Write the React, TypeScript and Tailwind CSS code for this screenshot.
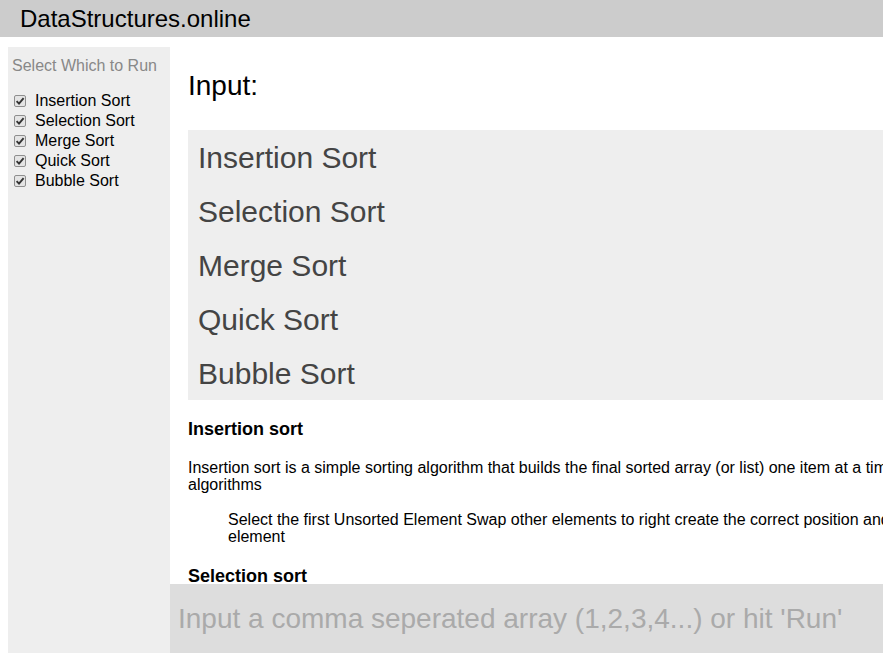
const algorithms = [
  "Insertion Sort",
  "Selection Sort",
  "Merge Sort",
  "Quick Sort",
  "Bubble Sort",
];

function CheckMark() {
  return (
    <span className="w-[12px] h-[12px] shrink-0 rounded-[2px] border border-[#8e8e8e] bg-[#e4e4e4] flex items-center justify-center">
      <svg width="10" height="10" viewBox="0 0 10 10">
        <path
          d="M1.6 5.2 L4 7.6 L8.6 2.2"
          fill="none"
          stroke="#333"
          strokeWidth="1.9"
        />
      </svg>
    </span>
  );
}

function Sidebar() {
  return (
    <aside className="w-[162px] shrink-0 bg-[#eeeeee] pl-[4px] pt-[10px]">
      <p className="text-[16px] leading-[18px] text-[#888888]">
        Select Which to Run
      </p>
      <ul className="mt-[16px]">
        {algorithms.map((name) => (
          <li
            key={name}
            className="flex items-center gap-[9px] pl-[2px] h-[20px] text-[16px] text-black"
          >
            <CheckMark />
            <span>{name}</span>
          </li>
        ))}
      </ul>
    </aside>
  );
}

export default function App() {
  return (
    <div
      className="relative w-[883px] h-[653px] overflow-hidden bg-white flex flex-col"
      style={{ fontFamily: '"Liberation Sans", Arial, sans-serif' }}
    >
      <header className="h-[37px] shrink-0 bg-[#cccccc] pl-[20px] flex items-center">
        <h1 className="text-[24px] leading-[28px] text-black">
          DataStructures.online
        </h1>
      </header>

      <div className="flex flex-1 pl-[8px] pt-[10px] min-h-0">
        <Sidebar />

        <main className="w-[1100px] shrink-0 pl-[18px]">
          <h2 className="mt-[23px] text-[28px] leading-[32px] text-black">
            Input:
          </h2>

          <div className="mt-[28px] bg-[#eeeeee] px-[10px]">
            {algorithms.map((name) => (
              <div
                key={name}
                className="h-[54px] flex items-center text-[30px] text-[#444444]"
              >
                {name}
              </div>
            ))}
          </div>

          <h3 className="mt-[19px] text-[18px] leading-[21px] font-bold text-black">
            Insertion sort
          </h3>
          <p className="mt-[19px] text-[16px] leading-[17px] text-black whitespace-nowrap">
            Insertion sort is a simple sorting algorithm that builds the final
            sorted array (or list) one item at a time. It is much less efficient
            on large lists than more advanced
            <br />
            algorithms
          </p>
          <p className="mt-[18px] ml-[40px] text-[16px] leading-[17px] text-black whitespace-nowrap">
            Select the first Unsorted Element Swap other elements to right
            create the correct position and shift the unsorted
            <br />
            element
          </p>

          <h3 className="mt-[21px] text-[18px] leading-[21px] font-bold text-black">
            Selection sort
          </h3>
        </main>
      </div>

      <div className="absolute left-[170px] right-0 bottom-0 h-[69px] bg-[#dddddd] flex items-center">
        <input
          className="w-full h-full bg-transparent px-[8px] text-[28px] text-[#444444] placeholder:text-[#aaaaaa] outline-none"
          placeholder="Input a comma seperated array (1,2,3,4...) or hit 'Run'"
        />
      </div>
    </div>
  );
}
